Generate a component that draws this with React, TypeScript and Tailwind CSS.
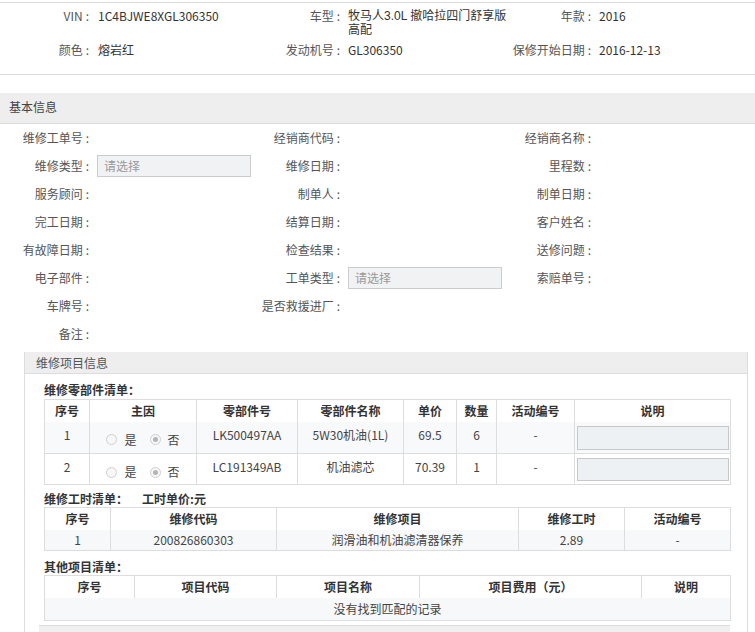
import React from "react";

const Label = ({ children }: { children: React.ReactNode }) => (
  <div className="w-[89px] shrink-0 text-right text-[#555] whitespace-nowrap">
    {children ? (
      <>
        {children}
        <span className="ml-[3px]">:</span>
      </>
    ) : null}
  </div>
);

const SelectBox = () => (
  <div className="ml-[8px] w-[156px] h-[22px] border border-[#ccc] bg-[#f1f2f4] text-[#999] pl-[6px] flex items-center">
    请选择
  </div>
);

const Radio = ({ checked }: { checked?: boolean }) => (
  <span className="inline-flex w-[11px] h-[11px] rounded-full border border-[#cfcfcf] bg-[#f7f7f7] items-center justify-center">
    {checked && <span className="w-[5px] h-[5px] rounded-full bg-[#b5b5b5]" />}
  </span>
);

export default function App() {
  const formRows: [string, React.ReactNode, string, React.ReactNode, string][] = [
    ["维修工单号", null, "经销商代码", null, "经销商名称"],
    ["维修类型", <SelectBox key="a" />, "维修日期", null, "里程数"],
    ["服务顾问", null, "制单人", null, "制单日期"],
    ["完工日期", null, "结算日期", null, "客户姓名"],
    ["有故障日期", null, "检查结果", null, "送修问题"],
    ["电子部件", null, "工单类型", <SelectBox key="b" />, "索赔单号"],
    ["车牌号", null, "是否救援进厂", null, ""],
    ["备注", null, "", null, ""],
  ];

  const parts = [
    { no: "1", code: "LK500497AA", name: "5W30机油(1L)", price: "69.5", qty: "6" },
    { no: "2", code: "LC191349AB", name: "机油滤芯", price: "70.39", qty: "1" },
  ];

  const th = "border-l border-[#ddd] h-[22px] font-bold text-[#333] text-center align-middle";

  return (
    <div className="w-[755px] h-[632px] overflow-hidden bg-white text-[12px] leading-[16px] text-[#333] font-['Noto_Sans_CJK_SC','Liberation_Sans',sans-serif]">
      {/* Top vehicle card */}
      <div className="mt-[2px] border-t border-b border-[#ddd] pt-[6px] h-[73px]">
        <div className="grid grid-cols-[251px_251px_253px] items-start leading-[13px]">
          <div className="flex">
            <Label>VIN</Label>
            <div className="ml-[9px]">1C4BJWE8XGL306350</div>
          </div>
          <div className="flex min-w-0">
            <Label>车型</Label>
            <div className="ml-[8px] shrink-0 whitespace-nowrap leading-[14px] font-['Liberation_Sans','Noto_Sans_CJK_SC',sans-serif]">
              <div>牧马人3.0L 撤哈拉四门舒享版</div>
              <div>高配</div>
            </div>
          </div>
          <div className="flex">
            <Label>年款</Label>
            <div className="ml-[8px]">2016</div>
          </div>
        </div>
        <div className="grid grid-cols-[251px_251px_253px] mt-[6px] leading-[13px]">
          <div className="flex">
            <Label>颜色</Label>
            <div className="ml-[9px]">熔岩红</div>
          </div>
          <div className="flex">
            <Label>发动机号</Label>
            <div className="ml-[8px]">GL306350</div>
          </div>
          <div className="flex">
            <Label>保修开始日期</Label>
            <div className="ml-[8px]">2016-12-13</div>
          </div>
        </div>
      </div>

      {/* 基本信息 header */}
      <div className="mt-[18px] h-[31px] bg-[#eeeeee] border-b border-[#dcdcdc] flex items-center pl-[9px] pb-[3px] text-[#444]">
        基本信息
      </div>

      {/* Form */}
      <div>
        {formRows.map((r, i) => (
          <div key={i} className="grid grid-cols-[251px_251px_253px] h-[28px] items-center">
            <div className="flex items-center">
              <Label>{r[0]}</Label>
              {r[1]}
            </div>
            <div className="flex items-center">
              <Label>{r[2]}</Label>
              {r[3]}
            </div>
            <div className="flex items-center">
              <Label>{r[4]}</Label>
            </div>
          </div>
        ))}
      </div>

      {/* 维修项目信息 panel */}
      <div className="mt-[4px] ml-[24px] w-[724px] border-l border-r border-[#ddd]">
        <div className="h-[22px] bg-[#eeeeee] border-b border-[#ddd] flex items-center pl-[11px] text-[#555]">
          维修项目信息
        </div>
        <div className="px-[19px] pt-[7px]">
          <div className="font-bold text-[#333] h-[18px] leading-[18px]">维修零部件清单：</div>
          <table className="w-[686px] table-fixed border-collapse border border-[#ddd]">
            <colgroup>
              <col className="w-[45px]" />
              <col className="w-[107px]" />
              <col className="w-[101px]" />
              <col className="w-[106px]" />
              <col className="w-[53px]" />
              <col className="w-[40px]" />
              <col className="w-[78px]" />
              <col className="w-[156px]" />
            </colgroup>
            <thead>
              <tr>
                <th className={th + " border-l-0"}>序号</th>
                <th className={th}>主因</th>
                <th className={th}>零部件号</th>
                <th className={th}>零部件名称</th>
                <th className={th}>单价</th>
                <th className={th}>数量</th>
                <th className={th}>活动编号</th>
                <th className={th}>说明</th>
              </tr>
            </thead>
            <tbody>
              {parts.map((p, i) => (
                <tr key={i} className={(i === 0 ? "bg-[#f8f9fa] h-[32px]" : "bg-white h-[31px] border-t border-[#ddd]")}>
                  <td className="text-center align-top pt-[5px] text-[#444]">{p.no}</td>
                  <td className="border-l border-[#ddd] align-top pt-[10px]">
                    <div className="flex items-center justify-center gap-[7px] text-[#444]">
                      <Radio />
                      <span>是</span>
                      <span className="ml-[6px] inline-flex"><Radio checked /></span>
                      <span>否</span>
                    </div>
                  </td>
                  <td className="border-l border-[#ddd] text-center align-top pt-[5px] text-[#444]">{p.code}</td>
                  <td className="border-l border-[#ddd] text-center align-top pt-[5px] text-[#444]">{p.name}</td>
                  <td className="border-l border-[#ddd] text-center align-top pt-[5px] text-[#444]">{p.price}</td>
                  <td className="border-l border-[#ddd] text-center align-top pt-[5px] text-[#444]">{p.qty}</td>
                  <td className="border-l border-[#ddd] text-center align-top pt-[5px] text-[#444]">-</td>
                  <td className="border-l border-[#ddd] align-top pt-[4px] pl-[2px]">
                    <div className={"w-[152px] border border-[#c8c8c8] bg-[#eef1f4] " + (i === 0 ? "h-[24px]" : "h-[23px]")} />
                  </td>
                </tr>
              ))}
            </tbody>
          </table>

          <div className="mt-[5px] h-[17px] leading-[17px] flex font-bold text-[#333]">
            <span className="w-[98px]">维修工时清单：</span>
            <span>工时单价:元</span>
          </div>
          <table className="w-[686px] table-fixed border-collapse border border-[#ddd]">
            <colgroup>
              <col className="w-[66px]" />
              <col className="w-[166px]" />
              <col className="w-[242px]" />
              <col className="w-[106px]" />
              <col className="w-[106px]" />
            </colgroup>
            <thead>
              <tr>
                <th className={th + " border-l-0"}>序号</th>
                <th className={th}>维修代码</th>
                <th className={th}>维修项目</th>
                <th className={th}>维修工时</th>
                <th className={th}>活动编号</th>
              </tr>
            </thead>
            <tbody>
              <tr className="h-[21px] bg-[#f6f8f9] text-[#444]">
                <td className="text-center">1</td>
                <td className="border-l border-[#ddd] text-center">200826860303</td>
                <td className="border-l border-[#ddd] text-center">润滑油和机油滤清器保养</td>
                <td className="border-l border-[#ddd] text-center">2.89</td>
                <td className="border-l border-[#ddd] text-center">-</td>
              </tr>
            </tbody>
          </table>

          <div className="mt-[9px] h-[14px] leading-[14px] font-bold text-[#333]">其他项目清单：</div>
          <table className="mt-[1px] w-[686px] table-fixed border-collapse border border-[#ddd]">
            <colgroup>
              <col className="w-[90px]" />
              <col className="w-[142px]" />
              <col className="w-[143px]" />
              <col className="w-[222px]" />
              <col className="w-[89px]" />
            </colgroup>
            <thead>
              <tr>
                <th className={th + " border-l-0"}>序号</th>
                <th className={th}>项目代码</th>
                <th className={th}>项目名称</th>
                <th className={th}>项目费用（元）</th>
                <th className={th}>说明</th>
              </tr>
            </thead>
            <tbody>
              <tr className="h-[23px] bg-[#f6f8f9] text-[#444]">
                <td colSpan={5} className="text-center">没有找到匹配的记录</td>
              </tr>
            </tbody>
          </table>
        </div>
        <div className="mt-[4px] ml-[14px] w-[691px] h-[20px] bg-[#f0f0f0] border-t border-[#ddd]" />
      </div>
    </div>
  );
}
